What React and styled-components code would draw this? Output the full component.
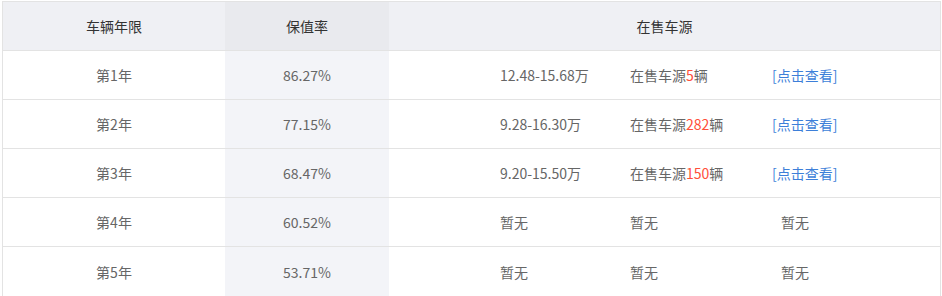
import React from 'react';
import styled, { createGlobalStyle } from 'styled-components';

const GlobalStyle = createGlobalStyle`
  body {
    margin: 0;
    background: #fff;
    font-family: "Microsoft YaHei", "Noto Sans CJK SC", "Noto Sans", sans-serif;
  }
`;

const Page = styled.div`
  padding: 1px 0 0 2px;
`;

const Table = styled.div`
  width: 939px;
  box-sizing: border-box;
  border: 1px solid #e3e3e3;
`;

const Row = styled.div`
  display: grid;
  grid-template-columns: 222px 164px 1fr;
  height: 49px;
  box-sizing: border-box;
  border-bottom: ${p => (p.$last ? 'none' : '1px solid #e3e3e3')};
  background: ${p => (p.$head ? '#eff0f4' : '#fff')};
`;

const Cell = styled.div`
  display: flex;
  align-items: center;
  justify-content: center;
  font-size: 14px;
  color: ${p => (p.$head ? '#333' : '#666')};
  background: ${p => (p.$shade ? (p.$head ? '#e9eaee' : '#f3f4f8') : 'transparent')};
`;

const SourceCell = styled.div`
  display: flex;
  align-items: center;
  padding-left: 111px;
  font-size: 14px;
  color: #666;
`;

const Price = styled.span`
  width: 130px;
`;

const Count = styled.span`
  width: 142px;
`;

const Num = styled.span`
  color: #ff4f3a;
`;

const Link = styled.a`
  color: #3d7fd9;
  text-decoration: none;
  cursor: pointer;
`;

const None = styled.span`
  padding-left: ${p => p.$indent || 0}px;
`;

const rows = [
  { year: '第1年', rate: '86.27%', price: '12.48-15.68万', count: '5' },
  { year: '第2年', rate: '77.15%', price: '9.28-16.30万', count: '282' },
  { year: '第3年', rate: '68.47%', price: '9.20-15.50万', count: '150' },
  { year: '第4年', rate: '60.52%' },
  { year: '第5年', rate: '53.71%' },
];

export default function App() {
  return (
    <Page>
      <GlobalStyle />
      <Table>
        <Row $head>
          <Cell $head>车辆年限</Cell>
          <Cell $head $shade>保值率</Cell>
          <Cell $head>在售车源</Cell>
        </Row>
        {rows.map((r, i) => (
          <Row key={r.year} $last={i === rows.length - 1}>
            <Cell>{r.year}</Cell>
            <Cell $shade>{r.rate}</Cell>
            <SourceCell>
              {r.price ? (
                <>
                  <Price>{r.price}</Price>
                  <Count>
                    在售车源<Num>{r.count}</Num>辆
                  </Count>
                  <Link>[点击查看]</Link>
                </>
              ) : (
                <>
                  <Price>暂无</Price>
                  <Count>暂无</Count>
                  <None $indent={9}>暂无</None>
                </>
              )}
            </SourceCell>
          </Row>
        ))}
      </Table>
    </Page>
  );
}
